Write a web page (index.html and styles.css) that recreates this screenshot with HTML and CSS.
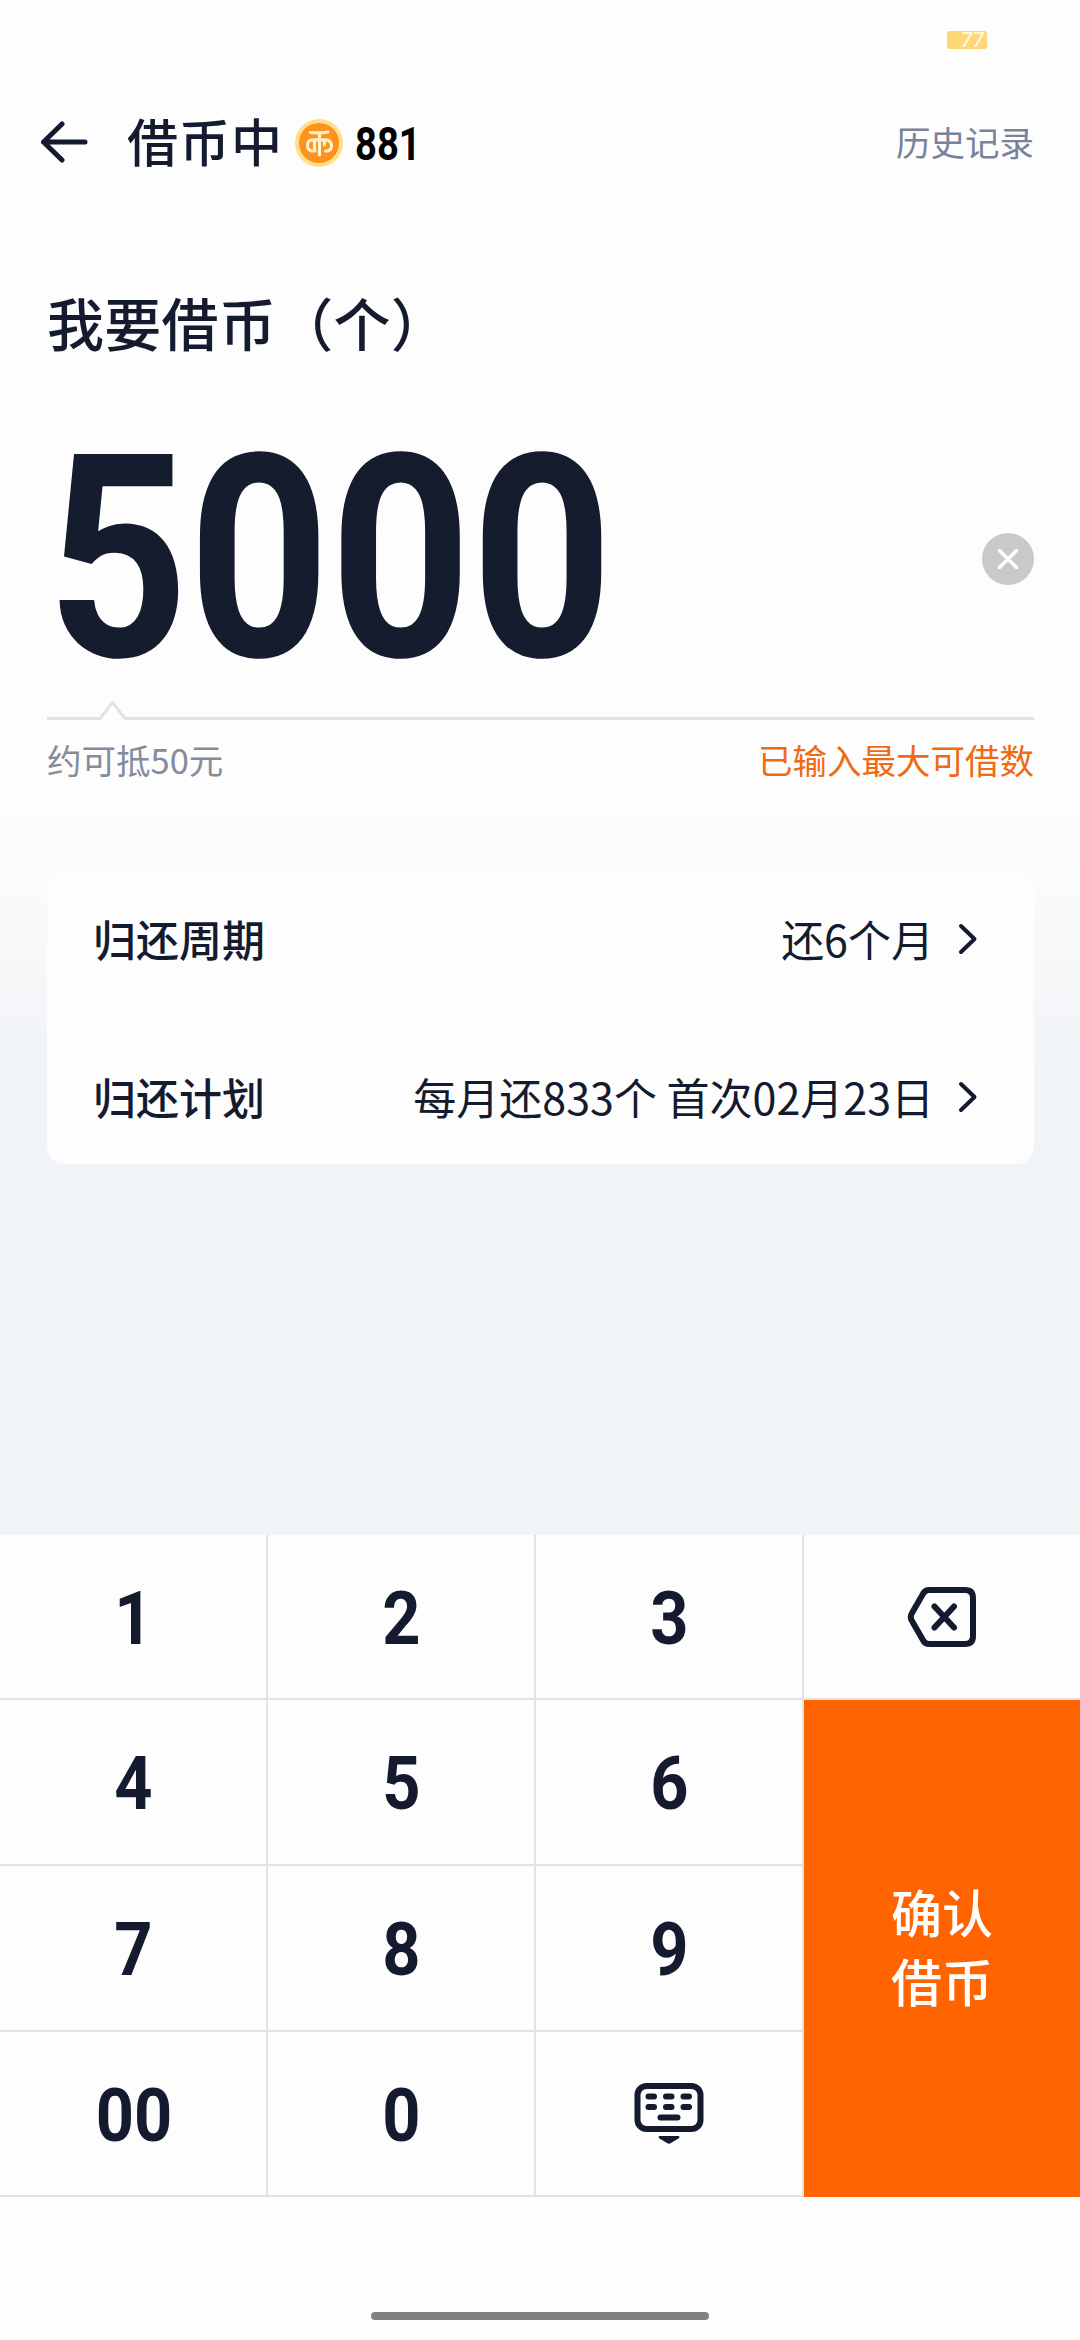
FILE: index.html
```html
<!DOCTYPE html>
<html lang="zh-CN">
<head>
<meta charset="utf-8">
<title>借币</title>
<link rel="stylesheet" href="styles.css">
</head>
<body>
<div class="screen">
  <div class="status"><span class="battery"><span class="level">77</span></span></div>
  <header class="topbar">
    <svg class="back" width="48" height="42" viewBox="0 0 48 42"><path d="M22 3 3.500 21 22 39M3.500 21H45" /></svg>
    <h1 class="title">借币中</h1>
    <svg class="coin" width="48" height="50" viewBox="0 0 48 50">
      <circle cx="24" cy="25" r="24" fill="#ffe08a"/>
      <circle cx="24" cy="25" r="20" fill="#ff921c"/>
      <g fill="none" stroke="#fff1cf" stroke-width="3.200" stroke-linecap="round" stroke-linejoin="round"><path d="M15.500 14.500Q24 15.500 33 14M24.500 15V37M20 33H17a5 5 0 0 1-4.500-5.500Q12.500 21.800 18 21.800H31Q36 22 36.500 27.500A5 5 0 0 1 32 33H30.500M19.500 22V32.500M29.500 22V27"/></g>
    </svg>
    <span class="balance">881</span>
    <a class="history">历史记录</a>
  </header>
  <main class="content">
    <h2 class="heading">我要借币（个）</h2>
    <div class="amount">
      <span class="figure">5000</span>
      <svg class="clear" width="52" height="52" viewBox="0 0 52 52"><circle cx="26" cy="26" r="26" fill="#c9c9c9"/><path d="M17.500 17.500 34.500 34.500M34.500 17.500 17.500 34.500" stroke="#fff" stroke-width="3.500" stroke-linecap="round"/></svg>
    </div>
    <svg class="rule" width="987" height="20" viewBox="0 0 987 20"><path d="M0 17.500H53L65.500 1.500 78 17.500H987"/></svg>
    <div class="hints"><span class="worth">约可抵50元</span><span class="limit">已输入最大可借数</span></div>
    <section class="card">
      <div class="row"><span class="label">归还周期</span><span class="value">还6个月</span><svg class="chevron" width="20" height="32" viewBox="0 0 20 32"><path d="M3 3 16.500 16 3 29"/></svg></div>
      <div class="row"><span class="label">归还计划</span><span class="value">每月还833个 首次02月23日</span><svg class="chevron" width="20" height="32" viewBox="0 0 20 32"><path d="M3 3 16.500 16 3 29"/></svg></div>
    </section>
  </main>
  <div class="keypad">
    <div class="key"><span>1</span></div><div class="key"><span>2</span></div><div class="key"><span>3</span></div>
    <div class="key erase"><svg width="70" height="60" viewBox="0 0 70 60" fill="none" stroke="#141b2e" stroke-width="6" stroke-linecap="round" stroke-linejoin="round"><path d="M22 3H58Q66 3 66 11V49Q66 57 58 57H22Q18.500 57 16.500 54L5 34Q2.500 30 5 26L16.500 6Q18.500 3 22 3Z"/><path d="M27.500 19.500 47 40.500M47 19.500 27.500 40.500"/></svg></div>
    <div class="key"><span>4</span></div><div class="key"><span>5</span></div><div class="key"><span>6</span></div>
    <div class="confirm">确认<br>借币</div>
    <div class="key"><span>7</span></div><div class="key"><span>8</span></div><div class="key"><span>9</span></div>
    <div class="key"><span>00</span></div><div class="key"><span>0</span></div>
    <div class="key hide"><svg width="70" height="62" viewBox="0 0 70 62"><rect x="3.500" y="3" width="63" height="43" rx="9" fill="none" stroke="#141b2e" stroke-width="6"/><path d="M14.500 13.500h5.500M32 13.500h5.500M49.500 13.500h5.500M14.500 24h5.500M32 24h5.500M49.500 24h5.500M26.500 34.500h17" stroke="#141b2e" stroke-width="6" stroke-linecap="round"/><path d="M25.500 53h19q2 .8 0 2.500L37 60q-2 1.300-4 0l-7.500-4.500q-2-1.700 0-2.500z" fill="#141b2e"/></svg></div>
  </div>
  <footer class="home"><span class="bar"></span></footer>
</div>
</body>
</html>
```

FILE: styles.css
```css
* { box-sizing: border-box; }
body { margin: 0; font-family: "Noto Sans CJK SC", sans-serif; color: #141b2e; }
.screen {
  width: 1080px; height: 2340px; display: flex; flex-direction: column;
  background: linear-gradient(#fdfdfd 0, #fdfdfd 790px, #fafbfb 880px, #f4f6f8 1000px, #f0f3f8 1080px, #f0f3f8 1480px, #f1f5f7 1535px);
}
.status { height: 80px; padding: 31px 93px 0 0; display: flex; justify-content: flex-end; }
.battery { width: 40px; height: 18px; border-radius: 2px; background: #ffd777; padding-right: 3px; text-align: right; }
.level { display: block; font: italic 500 21px/18px Roboto, sans-serif; color: #fff6dc; }
.topbar { height: 125px; padding: 0 46px 0 40px; display: flex; align-items: center; }
.back { flex: none; margin-top: -2px; }
.back path { fill: none; stroke: #141b2e; stroke-width: 5; stroke-linecap: round; stroke-linejoin: round; }
.title { margin: -5px 0 0 39px; width: 156px; font-size: 51px; line-height: 60px; font-weight: 500; letter-spacing: 1px; white-space: nowrap; }
.coin { margin-left: 12px; flex: none; }
.balance { margin: 2px 0 0 12px; font: 700 46px/50px Roboto, sans-serif; color: #000; transform: scaleX(.83); transform-origin: left; }
.history { margin: -3px 0 0 auto; font-size: 34.500px; line-height: 50px; color: #78839a; }
.content { height: 1330px; padding: 0 46px 0 47px; }
.heading { margin: 74px 0 0; font-size: 57px; line-height: 84px; font-weight: 500; letter-spacing: .3px; }
.amount { height: 338px; padding-top: 54px; display: flex; align-items: center; justify-content: space-between; }
.figure { display: block; width: 560px; font: 700 284px/284px Roboto, sans-serif; color: #141c2e; transform: scaleX(.868); transform-origin: left; }
.clear { flex: none; }
.rule { display: block; }
.rule path { fill: none; stroke: #e2e2e2; stroke-width: 3; }
.hints { display: flex; justify-content: space-between; height: 149px; padding-top: 13px; font-size: 34.500px; line-height: 50px; }
.worth { color: #848b9b; }
.limit { color: #f06a14; }
.card { height: 294px; padding: 0 56px 0 46px; border-radius: 17px; background: #fdfdfd; }
.row { display: flex; align-items: center; height: 138px; font-size: 43px; line-height: 60px; }
.row + .row { margin-top: 20px; }
.label { margin-top: -2px; font-weight: 500; }
.value { margin: -2px 24px 0 auto; }
.chevron path { fill: none; stroke: #141b2e; stroke-width: 4; stroke-linecap: round; stroke-linejoin: round; }
.keypad {
  display: grid; flex: none; height: 662px; background: #fdfdfd;
  grid-template-columns: 268px 268px 268px 276px;
  grid-template-rows: 165px 166px 166px 165px;
}
.key { border-right: 2px solid #e2e2e2; border-bottom: 2px solid #e2e2e2; display: flex; align-items: center; justify-content: center; font: 700 75px/80px Roboto, sans-serif; }
.key span { margin: 2px 0 0 2px; transform: scaleX(.89); }
.erase { border-right: 0; }
.confirm { grid-area: 2 / 4 / 5 / 5; background: #ff6400; color: #fff; display: flex; align-items: center; justify-content: center; padding-bottom: 6px; font-size: 51px; line-height: 69px; font-weight: 500; }
.home { flex: 1; background: #fdfdfd; display: flex; justify-content: center; align-items: flex-end; padding-bottom: 20px; }
.bar { width: 338px; height: 8px; border-radius: 4px; background: #808080; }
```
